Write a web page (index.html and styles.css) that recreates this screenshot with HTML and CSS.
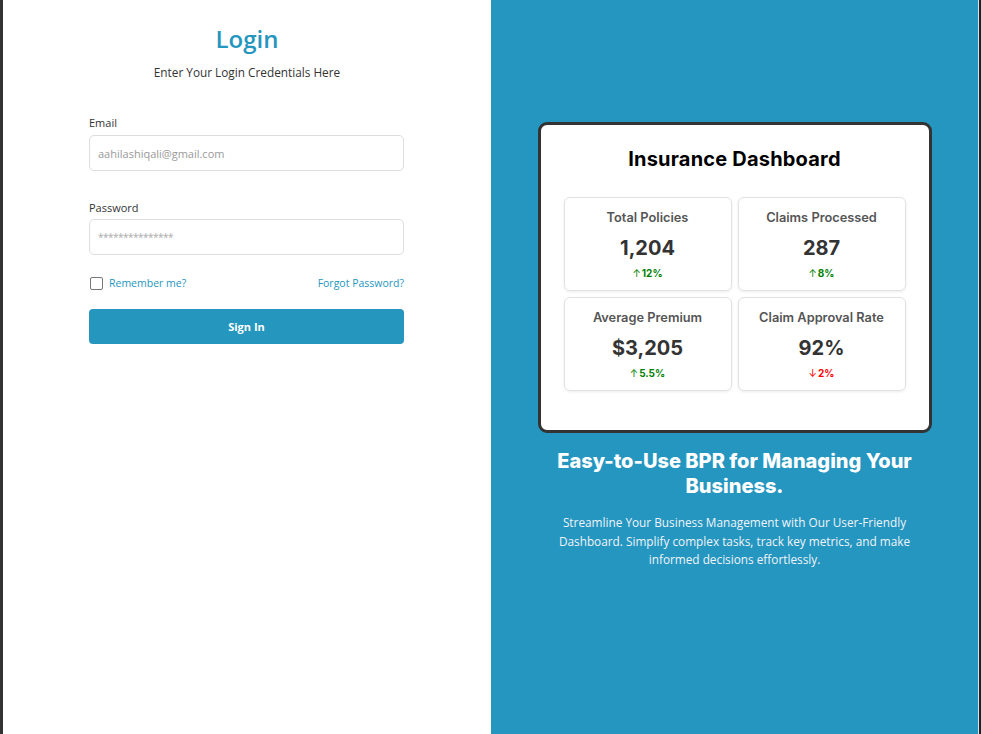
FILE: index.html
```html
<!DOCTYPE html>
<html lang="en">
<head>
<meta charset="utf-8">
<title>Login</title>
<link rel="stylesheet" href="styles.css">
</head>
<body>
<div class="frame">
  <section class="left">
    <h1 class="title">Login</h1>
    <p class="subtitle">Enter Your Login Credentials Here</p>
    <form class="form">
      <label class="label">Email</label>
      <div class="input">aahilashiqali@gmail.com</div>
      <label class="label pw">Password</label>
      <div class="input stars">***************</div>
      <div class="row">
        <label class="remember"><span class="box"></span>Remember me?</label>
        <a class="forgot">Forgot Password?</a>
      </div>
      <button type="button" class="btn">Sign In</button>
    </form>
  </section>
  <section class="right">
    <div class="dash">
      <h2 class="dash-title">Insurance Dashboard</h2>
      <div class="grid">
        <div class="stat">
          <div class="stat-label">Total Policies</div>
          <div class="stat-value">1,204</div>
          <div class="stat-change up"><span class="arrow">↑</span>12%</div>
        </div>
        <div class="stat">
          <div class="stat-label">Claims Processed</div>
          <div class="stat-value">287</div>
          <div class="stat-change up"><span class="arrow">↑</span>8%</div>
        </div>
        <div class="stat">
          <div class="stat-label">Average Premium</div>
          <div class="stat-value">$3,205</div>
          <div class="stat-change up"><span class="arrow">↑</span>5.5%</div>
        </div>
        <div class="stat">
          <div class="stat-label">Claim Approval Rate</div>
          <div class="stat-value">92%</div>
          <div class="stat-change down"><span class="arrow">↓</span>2%</div>
        </div>
      </div>
    </div>
    <h3 class="promo">Easy-to-Use BPR for Managing Your Business.</h3>
    <p class="promo-text">Streamline Your Business Management with Our User-Friendly Dashboard. Simplify complex tasks, track key metrics, and make informed decisions effortlessly.</p>
  </section>
  <div class="edge"></div>
</div>
</body>
</html>
```

FILE: styles.css
```css
html, body {
  margin: 0;
  padding: 0;
  height: 100%;
}
body {
  font-family: "Open Sans", "Noto Sans", sans-serif;
  background: #fff;
}
.frame {
  display: flex;
  height: 734px;
  border-left: 3px solid #333;
  box-sizing: border-box;
}
.left {
  width: 488px;
  flex: none;
  background: #fff;
  display: flex;
  flex-direction: column;
  align-items: center;
  padding-top: 23px;
  box-sizing: border-box;
}
.title {
  margin: 0;
  font-size: 24px;
  font-weight: 600;
  color: #2596be;
  line-height: 32px;
}
.subtitle {
  margin: 9px 0 0;
  font-size: 11.8px;
  color: #333;
  line-height: 16px;
}
.form {
  width: 315px;
  margin-top: 36px;
  margin-right: 1px;
  display: flex;
  flex-direction: column;
}
.label {
  font-size: 11px;
  color: #333;
  line-height: 14px;
}
.label.pw { margin-top: 30px; }
.input {
  margin-top: 5px;
  height: 36px;
  border: 1px solid #ddd;
  border-radius: 5px;
  box-sizing: border-box;
  padding: 0 8px;
  display: flex;
  align-items: center;
  font-size: 11px;
  color: #999;
}
.input.stars {
  margin-top: 4px;
  font-size: 10px;
  letter-spacing: -0.5px;
  color: #aaa;
}
.row {
  margin-top: 21px;
  display: flex;
  justify-content: space-between;
  align-items: center;
  font-size: 10.5px;
  color: #2596be;
}
.remember {
  display: flex;
  align-items: center;
  gap: 6px;
}
.box {
  width: 11px;
  height: 11px;
  border: 1px solid #777;
  border-radius: 2px;
  margin-left: 1px;
}
.btn {
  margin-top: 19px;
  height: 35px;
  border: none;
  border-radius: 4px;
  background: #2596be;
  color: #fff;
  font-family: inherit;
  font-weight: 700;
  font-size: 11px;
}
.right {
  width: 487px;
  flex: none;
  background: #2596c0;
  display: flex;
  flex-direction: column;
  align-items: center;
  padding-top: 122px;
  box-sizing: border-box;
}
.edge {
  width: 3px;
  flex: none;
  border-left: 1px solid #cfe4ee;
  background: #222;
  box-sizing: border-box;
}
.dash {
  width: 394px;
  height: 311px;
  box-sizing: border-box;
  background: #fff;
  border: 3px solid #333;
  border-radius: 9px;
  padding: 20px 23px 0;
  font-family: "Inter", "Open Sans", sans-serif;
}
.dash-title {
  margin: 0;
  text-align: center;
  font-size: 20px;
  font-weight: 700;
  color: #000;
  line-height: 28px;
  letter-spacing: 0.2px;
}
.grid {
  margin-top: 24px;
  display: grid;
  grid-template-columns: 1fr 1fr;
  gap: 6px;
}
.stat {
  height: 94px;
  border: 1px solid #e2e2e2;
  border-radius: 6px;
  box-shadow: 0 1px 3px rgba(0,0,0,0.08);
  box-sizing: border-box;
  display: flex;
  flex-direction: column;
  align-items: center;
  padding-top: 12px;
}
.stat-label {
  font-size: 12.8px;
  font-weight: 600;
  color: #555;
  line-height: 16px;
}
.stat-value {
  margin-top: 10px;
  font-size: 20px;
  font-weight: 700;
  color: #333;
  line-height: 24px;
}
.stat-change {
  margin-top: 6px;
  font-size: 10px;
  font-weight: 700;
  line-height: 14px;
}
.stat-change .arrow {
  font-weight: 400;
  margin-right: 1px;
}
.up { color: #008000; }
.down { color: #ff0000; }
.promo {
  margin: 16px 0 0;
  width: 400px;
  text-align: center;
  font-family: "Inter", "Open Sans", sans-serif;
  font-size: 20px;
  font-weight: 800;
  color: #fff;
  line-height: 25px;
  letter-spacing: 0;
}
.promo-text {
  margin: 14px 0 0;
  width: 360px;
  text-align: center;
  font-size: 11.8px;
  color: #f0f4f8;
  line-height: 18.5px;
}
```
